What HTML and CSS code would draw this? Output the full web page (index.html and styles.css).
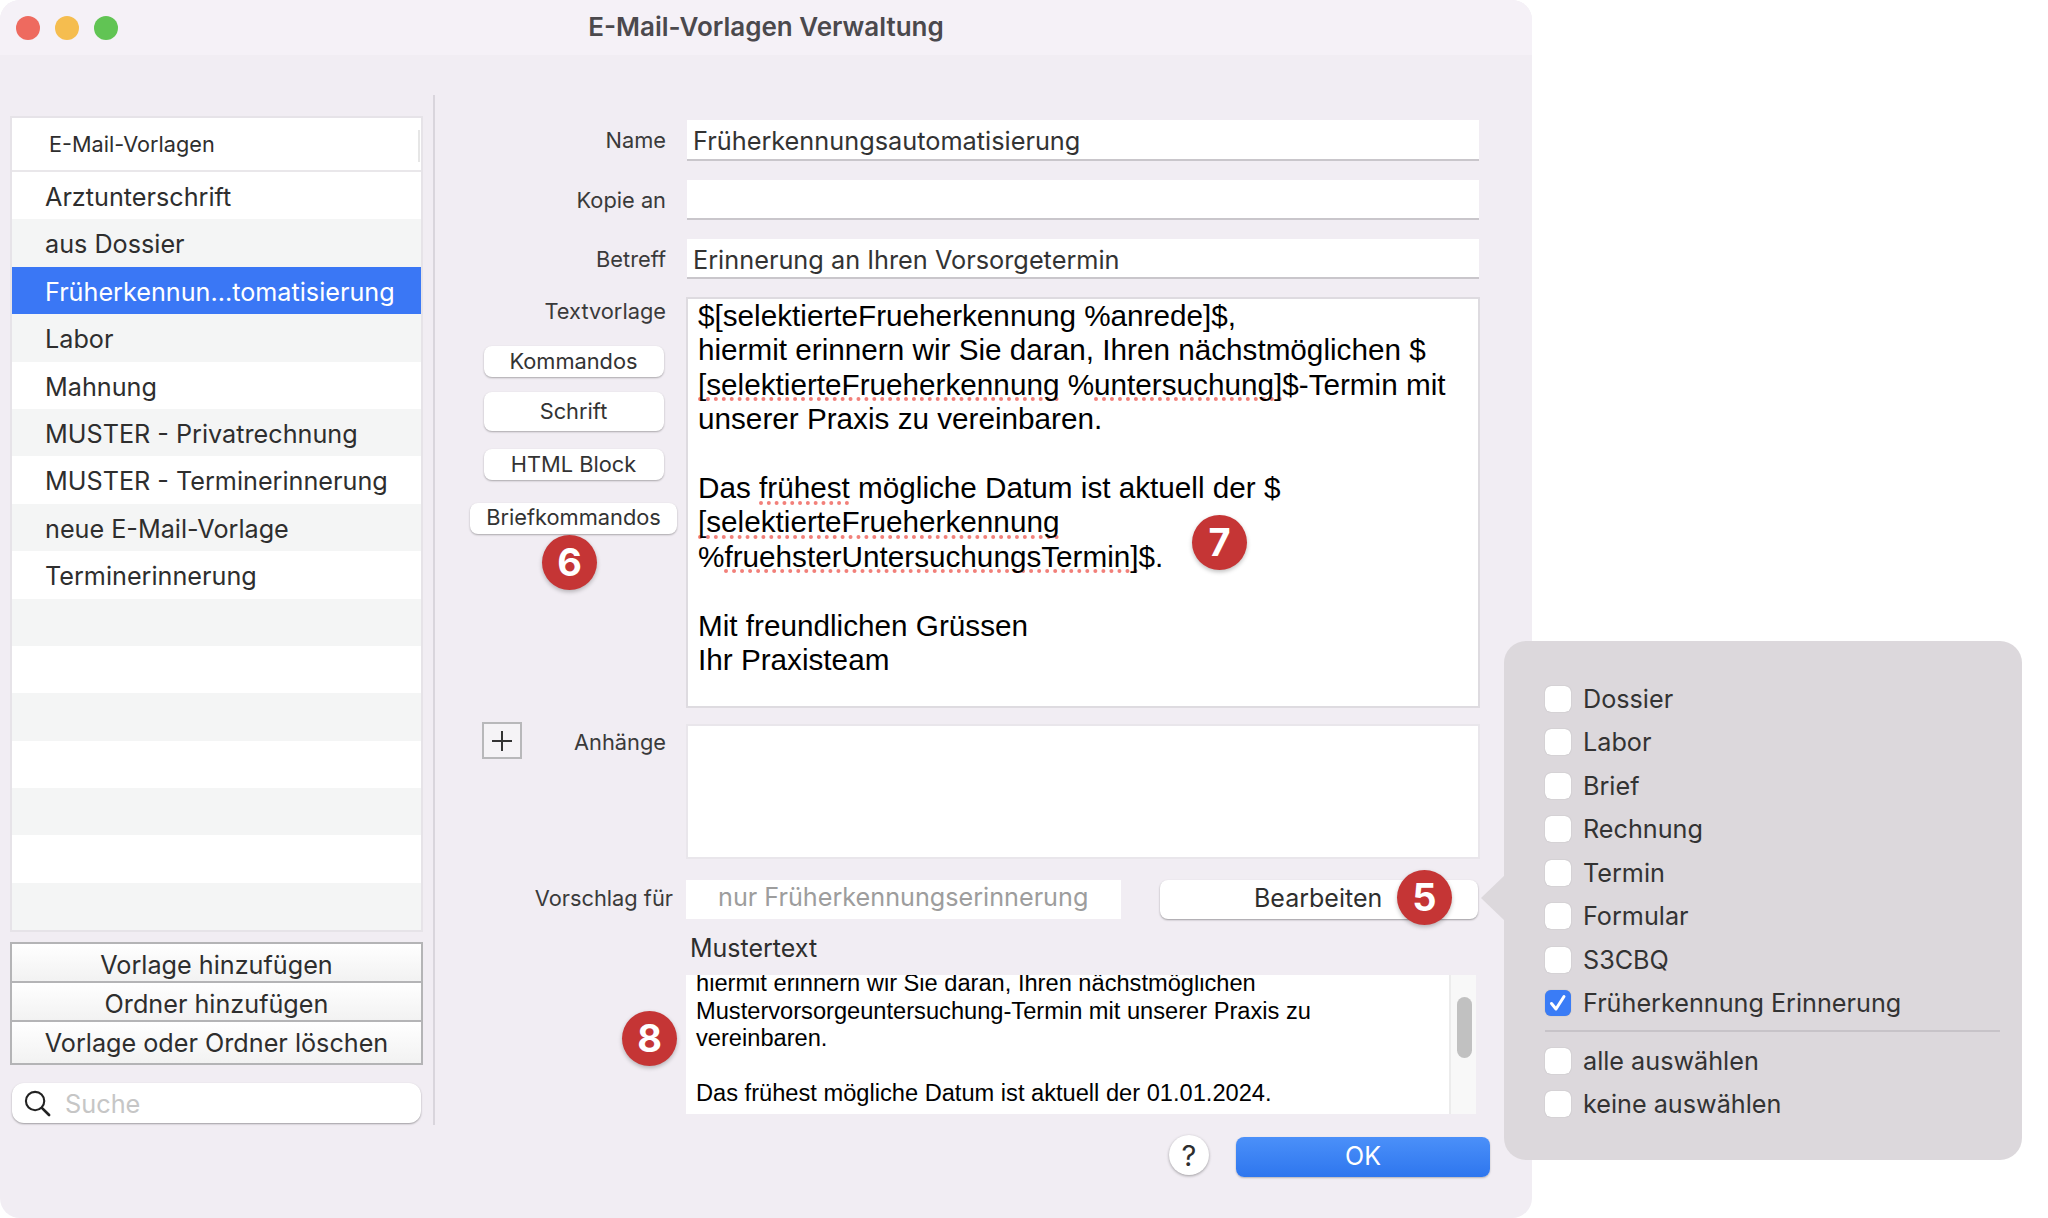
FILE: index.html
```html
<!DOCTYPE html>
<html lang="de">
<head>
    <meta charset="UTF-8">
    <title>E-Mail-Vorlagen Verwaltung</title>
    <link rel="stylesheet" href="styles.css">
</head>
<body>
    <div class="window">
        <div class="titlebar">
            <div class="lights">
                <span class="light red"></span>
                <span class="light yellow"></span>
                <span class="light green"></span>
            </div>
            <div class="title">E-Mail-Vorlagen Verwaltung</div>
        </div>

        <div class="main">
            <div class="sidebar">
                <div class="list">
                    <div class="list-head"><span>E-Mail-Vorlagen</span></div>
                    <div class="row">Arztunterschrift</div>
                    <div class="row">aus Dossier</div>
                    <div class="row selected">Früherkennun...tomatisierung</div>
                    <div class="row">Labor</div>
                    <div class="row">Mahnung</div>
                    <div class="row">MUSTER - Privatrechnung</div>
                    <div class="row">MUSTER - Terminerinnerung</div>
                    <div class="row">neue E-Mail-Vorlage</div>
                    <div class="row">Terminerinnerung</div>
                    <div class="row"></div>
                    <div class="row"></div>
                    <div class="row"></div>
                    <div class="row"></div>
                    <div class="row"></div>
                    <div class="row"></div>
                    <div class="row"></div>
                </div>
                <div class="actions">
                    <div class="action">Vorlage hinzufügen</div>
                    <div class="action">Ordner hinzufügen</div>
                    <div class="action last">Vorlage oder Ordner löschen</div>
                </div>
                <div class="search">
                    <svg width="27" height="27" viewBox="0 0 28 28" fill="none" stroke="#222" stroke-width="2.2">
                        <circle cx="11.5" cy="11.5" r="9.5"/>
                        <path d="M18.5 18.5 L26 26" stroke-width="2.8" stroke-linecap="round"/>
                    </svg>
                    <span>Suche</span>
                </div>
            </div>

            <div class="form">
                <div class="form-row name-row">
                    <label>Name</label>
                    <div class="field">Früherkennungsautomatisierung</div>
                </div>
                <div class="form-row copy-row">
                    <label>Kopie an</label>
                    <div class="field"></div>
                </div>
                <div class="form-row subject-row">
                    <label>Betreff</label>
                    <div class="field">Erinnerung an Ihren Vorsorgetermin</div>
                </div>
                <div class="form-row text-row">
                    <div class="side">
                        <label>Textvorlage</label>
                        <div class="pill kommandos">Kommandos</div>
                        <div class="pill schrift">Schrift</div>
                        <div class="pill html">HTML Block</div>
                        <div class="pill brief">Briefkommandos</div>
                    </div>
                    <div class="editor">
                        $[selektierteFrueherkennung %anrede]$,<br>
                        hiermit erinnern wir Sie daran, Ihren nächstmöglichen $<br>
                        <span class="typo">[selektierteFrueherkennung</span> %<span class="typo">untersuchung]</span>$-Termin mit<br>
                        unserer Praxis zu vereinbaren.<br>
                        <br>
                        Das <span class="typo">frühest</span> mögliche Datum ist aktuell der $<br>
                        <span class="typo">[selektierteFrueherkennung</span><br>
                        %<span class="typo">fruehsterUntersuchungsTermin]</span>$.<br>
                        <br>
                        Mit freundlichen Grüssen<br>
                        Ihr Praxisteam
                    </div>
                </div>
                <div class="form-row attach-row">
                    <div class="attach-side">
                        <div class="plus">
                            <svg width="22" height="22" viewBox="0 0 22 22" stroke="#333" stroke-width="2">
                                <path d="M11 1 V21 M1 11 H21"/>
                            </svg>
                        </div>
                        <label>Anhänge</label>
                    </div>
                    <div class="attachments"></div>
                </div>
                <div class="form-row suggest-row">
                    <label>Vorschlag für</label>
                    <div class="suggest">
                        <div class="suggest-value">nur Früherkennungserinnerung</div>
                        <div class="edit-btn">Bearbeiten</div>
                    </div>
                </div>
                <div class="form-row sample-label">
                    <span></span>
                    <div>Mustertext</div>
                </div>
                <div class="form-row">
                    <span></span>
                    <div class="sample">
                        <div class="sample-text">
                            <div class="sample-inner">
                                hiermit erinnern wir Sie daran, Ihren nächstmöglichen<br>
                                Mustervorsorgeuntersuchung-Termin mit unserer Praxis zu<br>
                                vereinbaren.<br>
                                <br>
                                Das frühest mögliche Datum ist aktuell der 01.01.2024.
                            </div>
                        </div>
                        <div class="track"><div class="thumb"></div></div>
                    </div>
                </div>
                <div class="footer">
                    <div class="help">?</div>
                    <div class="ok">OK</div>
                </div>
            </div>
        </div>

        <div class="badge b5">5</div>
        <div class="badge b6">6</div>
        <div class="badge b7">7</div>
        <div class="badge b8">8</div>
    </div>

    <div class="popover">
        <svg class="arrow" width="24" height="46" viewBox="0 0 24 46"><path d="M24 0 L0 23 L24 46 Z" fill="#dcd8dc"/></svg>
        <div class="check"><span class="box"></span>Dossier</div>
        <div class="check"><span class="box"></span>Labor</div>
        <div class="check"><span class="box"></span>Brief</div>
        <div class="check"><span class="box"></span>Rechnung</div>
        <div class="check"><span class="box"></span>Termin</div>
        <div class="check"><span class="box"></span>Formular</div>
        <div class="check"><span class="box"></span>S3CBQ</div>
        <div class="check"><span class="box on">
            <svg width="20" height="20" viewBox="0 0 20 20" fill="none" stroke="#fff" stroke-width="3" stroke-linecap="round" stroke-linejoin="round"><path d="M3.5 10.5 L8 16 L16 3.5"/></svg>
        </span>Früherkennung Erinnerung</div>
        <div class="divider"></div>
        <div class="check"><span class="box"></span>alle auswählen</div>
        <div class="check"><span class="box"></span>keine auswählen</div>
    </div>
</body>
</html>
```

FILE: styles.css
```css
* {
    box-sizing: border-box;
}

body {
    margin: 0;
    width: 2048px;
    height: 1218px;
    background: #fff;
    font-family: Inter, "Noto Sans", sans-serif;
    color: #2e2e2e;
    overflow: hidden;
    position: relative;
}

.window {
    position: relative;
    width: 1532px;
    height: 1218px;
    background: #f1edf3;
    border-radius: 20px;
    overflow: hidden;
}

/* Titelleiste */
.titlebar {
    position: relative;
    height: 55px;
    background: #f5f1f7;
    display: flex;
    align-items: center;
    justify-content: center;
}

.lights {
    position: absolute;
    left: 16px;
    top: 16px;
    display: flex;
    gap: 15px;
}

.light {
    width: 24px;
    height: 24px;
    border-radius: 50%;
}

.red { background: #ee6a5f; }
.yellow { background: #f5bd4f; }
.green { background: #61c454; }

.title {
    font-weight: 600;
    font-size: 26px;
    color: #4b494d;
    padding-bottom: 2px;
}

.main {
    display: flex;
    padding-top: 40px;
}

/* Linke Spalte */
.sidebar {
    width: 435px;
    height: 1030px;
    padding: 21px 11px 0 10px;
    border-right: 2px solid #d9d5dc;
}

.list {
    border: 2px solid #e6e3e8;
    background: #fff;
    width: 413px;
}

.list-head {
    height: 54px;
    display: flex;
    align-items: center;
    padding-left: 37px;
    font-size: 21.7px;
    border-bottom: 2px solid #e9e7ea;
    position: relative;
}

.list-head::after {
    content: '';
    position: absolute;
    right: 1px;
    top: 12px;
    height: 32px;
    width: 2px;
    background: #e6e6e6;
}

.row {
    height: 47.4px;
    padding-left: 33px;
    font-size: 25.2px;
    line-height: 50px;
    white-space: nowrap;
}

.row:nth-child(odd) {
    background: #f4f5f5;
}

.row.selected {
    background: #3a77f5;
    color: #fff;
}

.actions {
    margin-top: 10px;
    width: 413px;
    border: 2px solid #b4b4b6;
}

.action {
    height: 39px;
    background: linear-gradient(#ffffff, #f2f2f2);
    border-bottom: 2px solid #b4b4b6;
    font-size: 25.2px;
    text-align: center;
    line-height: 42px;
}

.action.last {
    height: 41px;
    border-bottom: none;
}

.search {
    margin: 18px 0 0 2px;
    width: 409px;
    height: 40px;
    background: #fff;
    border-radius: 12px;
    box-shadow: 0 1px 2px rgba(0, 0, 0, 0.35);
    display: flex;
    align-items: center;
    gap: 14px;
    padding-left: 12px;
    font-size: 25.3px;
    color: #c6c6c6;
}

/* Formular */
.form {
    width: 1097px;
    padding-top: 25px;
    padding-right: 42px;
    display: flex;
    flex-direction: column;
}

.form-row {
    display: grid;
    grid-template-columns: 251px 794px;
}

.form-row label {
    font-size: 21.8px;
    color: #3a3a3a;
    text-align: right;
    padding-right: 20px;
}

.name-row, .copy-row, .subject-row {
    align-items: center;
}

.name-row label, .copy-row label, .subject-row label {
    padding-bottom: 1px;
}

.copy-row, .subject-row {
    margin-top: 19px;
}

.text-row {
    margin-top: 18px;
}

.field {
    width: 792px;
    height: 40px;
    margin-left: 1px;
    background: #fff;
    border-bottom: 2px solid #c9c6cb;
    font-size: 25.3px;
    padding-left: 6px;
    line-height: 41px;
    color: #333;
}

.name-row .field {
    height: 41px;
}

.side {
    display: flex;
    flex-direction: column;
    align-items: center;
    padding: 0 9px 0 35px;
}

.side label {
    align-self: flex-end;
    padding-right: 11px;
    line-height: 28px;
}

.pill {
    width: 180px;
    height: 31px;
    background: #fff;
    border-radius: 8px;
    box-shadow: 0 1px 2px rgba(0, 0, 0, 0.3);
    font-size: 21.8px;
    text-align: center;
    line-height: 31px;
    color: #333;
}

.kommandos { margin-top: 21px; }
.schrift { margin-top: 15px; height: 39px; line-height: 39px; }
.html { margin-top: 18px; }
.brief { margin-top: 23px; width: 207px; line-height: 29px; }

.editor {
    height: 411px;
    background: #fff;
    border: 2px solid #dedbe0;
    padding: 0 0 0 10px;
    font-family: "Liberation Sans", Arial, sans-serif;
    font-size: 29.7px;
    line-height: 34.4px;
    color: #000;
    white-space: nowrap;
}

.typo {
    text-decoration: underline dotted #f2807a 3.5px;
    text-decoration-skip-ink: none;
    text-underline-offset: 3px;
}

.attach-row {
    margin-top: 16px;
}

.attach-side {
    display: flex;
    justify-content: space-between;
    padding: 0 0 0 47px;
}

.attach-side label {
    padding-top: 5px;
}

.plus {
    width: 40px;
    height: 37px;
    margin-top: -2px;
    border: 2px solid #b8b8ba;
    background: #f5f3f6;
    display: flex;
    align-items: center;
    justify-content: center;
}

.attachments {
    height: 135px;
    background: #fff;
    border: 2px solid #e9e6eb;
}

.suggest-row {
    margin-top: 21px;
    align-items: center;
}

.suggest-row label {
    padding-right: 13px;
    padding-bottom: 3px;
}

.suggest {
    display: flex;
    gap: 39px;
}

.suggest-value {
    width: 435px;
    height: 39px;
    background: #fff;
    padding-left: 32px;
    font-size: 25.2px;
    line-height: 35px;
    color: #9d9d9d;
}

.edit-btn {
    width: 318px;
    height: 39px;
    background: #fff;
    border-radius: 8px;
    box-shadow: 0 1px 2px rgba(0, 0, 0, 0.35);
    padding-left: 94px;
    font-size: 25px;
    line-height: 37px;
}

.sample-label {
    margin-top: 14px;
    font-size: 25px;
    line-height: 30px;
    height: 42px;
}

.sample-label div {
    padding-left: 4px;
}

.sample {
    width: 790px;
    height: 139px;
    display: flex;
    background: #fff;
    overflow: hidden;
}

.sample-text {
    flex: 1;
    padding-left: 10px;
    font-family: "Liberation Sans", Arial, sans-serif;
    font-size: 23.65px;
    line-height: 27.6px;
    color: #000;
    white-space: nowrap;
    overflow: hidden;
}

.sample-inner {
    margin-top: -5px;
}

.track {
    width: 27px;
    background: #f8f8f8;
    border-left: 2px solid #ececec;
    padding: 22px 4px 0 6px;
}

.thumb {
    height: 61px;
    width: 15px;
    border-radius: 8px;
    background: #c1c1c1;
}

.footer {
    margin-top: 23px;
    display: flex;
    justify-content: flex-end;
    gap: 27px;
}

.help {
    width: 40px;
    height: 40px;
    margin-top: -2px;
    border-radius: 50%;
    background: #fff;
    box-shadow: 0 1px 3px rgba(0, 0, 0, 0.35);
    text-align: center;
    font-size: 29px;
    line-height: 41px;
}

.ok {
    width: 254px;
    height: 40px;
    border-radius: 8px;
    background: linear-gradient(#4b90f9, #2e76ee);
    color: #fff;
    text-align: center;
    font-size: 25px;
    line-height: 39px;
    box-shadow: 0 1px 2px rgba(0, 0, 0, 0.25);
}

/* Nummern */
.badge {
    position: absolute;
    width: 55px;
    height: 55px;
    border-radius: 50%;
    background: #c53535;
    color: #fff;
    font-weight: 700;
    font-size: 38px;
    text-align: center;
    line-height: 55px;
    box-shadow: 0 2px 4px rgba(0, 0, 0, 0.25);
}

.b5 { left: 1397px; top: 870px; }
.b6 { left: 542px; top: 535px; }
.b7 { left: 1192px; top: 515px; }
.b8 { left: 622px; top: 1011px; }

/* Popover */
.popover {
    position: absolute;
    left: 1504px;
    top: 641px;
    width: 518px;
    height: 519px;
    background: #dcd8dc;
    border-radius: 22px;
    padding: 36px 22px 0 41px;
    font-size: 25.2px;
    color: #333;
}

.arrow {
    position: absolute;
    left: -23px;
    top: 234px;
}

.check {
    height: 43.5px;
    display: flex;
    align-items: center;
    gap: 12px;
}

.box {
    width: 26px;
    height: 26px;
    border-radius: 6px;
    background: #fff;
    box-shadow: 0 0 1px rgba(0, 0, 0, 0.3);
    display: flex;
    align-items: center;
    justify-content: center;
}

.box.on {
    background: #3a7cf6;
}

.divider {
    height: 2px;
    margin: 5px 0 7px;
    background: #c7c3c8;
}
```
